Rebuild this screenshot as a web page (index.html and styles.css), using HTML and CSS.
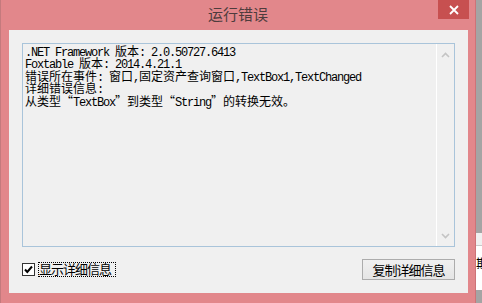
FILE: index.html
```html
<!DOCTYPE html>
<html lang="zh-CN">
<head>
<meta charset="utf-8">
<title>运行错误</title>
<link rel="stylesheet" href="styles.css">
</head>
<body>
<div class="screen">
  <div class="window">
    <div class="titlebar">
      <span class="title">运行错误</span>
      <div class="close">
        <svg width="10" height="10" viewBox="0 0 10 10"><path d="M1 1L9 9M9 1L1 9" stroke="#fff" stroke-width="1.8" fill="none"/></svg>
      </div>
    </div>
    <div class="client">
      <div class="textbox">
        <div class="text">
          <div class="ln">.NET Framework <span class="cj">版本</span>: 2.0.50727.6413</div>
          <div class="ln">Foxtable <span class="cj">版本</span>: 2014.4.21.1</div>
          <div class="ln"><span class="cj">错误所在事件</span>: <span class="cj">窗口</span>,<span class="cj">固定资产查询窗口</span>,TextBox1,TextChanged</div>
          <div class="ln"><span class="cj">详细错误信息</span>:</div>
          <div class="ln"><span class="cj">从类型“</span>TextBox<span class="cj">”到类型“</span>String<span class="cj">”的转换无效。</span></div>
        </div>
        <div class="scroll">
          <svg class="arrow" width="9" height="6" viewBox="0 0 9 6"><path d="M1 5L4.5 1.5L8 5" stroke="#c4c4c4" stroke-width="1.6" fill="none"/></svg>
          <svg class="arrow" width="9" height="6" viewBox="0 0 9 6"><path d="M1 1L4.5 4.5L8 1" stroke="#c4c4c4" stroke-width="1.6" fill="none"/></svg>
        </div>
      </div>
      <div class="footer">
        <label class="check">
          <span class="box"><svg width="11" height="11" viewBox="0 0 11 11"><path d="M2 5.5L4.3 8L9 2.5" stroke="#000" stroke-width="2" fill="none"/></svg></span>
          <span class="lbl">显示详细信息</span>
        </label>
        <button class="btn">复制详细信息</button>
      </div>
    </div>
  </div>
  <div class="behind">
    <div class="panel">
      <div class="panel-top"></div>
      <div class="panel-body">期</div>
    </div>
  </div>
</div>
</body>
</html>
```

FILE: styles.css
```css
html, body {
  margin: 0;
  padding: 0;
}
body {
  background: #a4a4a4;
  font-family: "Noto Sans CJK SC", sans-serif;
  overflow: hidden;
}
.screen {
  display: flex;
  width: 482px;
  height: 303px;
}
.window {
  width: 476px;
  height: 303px;
  box-sizing: border-box;
  flex: none;
  background: #e2878b;
  border-left: 1px solid #c47a7d;
  border-right: 1px solid #cd7378;
  display: flex;
  flex-direction: column;
}
.titlebar {
  position: relative;
  height: 30px;
  flex: none;
  text-align: center;
}
.title {
  display: block;
  font-size: 15px;
  line-height: 28px;
  color: #4e3c3d;
}
.close {
  position: absolute;
  top: 0;
  right: 6px;
  width: 31px;
  height: 19px;
  background: #c75050;
  display: flex;
  align-items: center;
  justify-content: center;
}
.client {
  margin: 0 7px 0 8px;
  width: 459px;
  height: 263px;
  box-sizing: border-box;
  padding: 13px;
  background: #f0f0f0;
  display: flex;
  flex-direction: column;
  gap: 12px;
}
.textbox {
  height: 205px;
  box-sizing: border-box;
  border: 1px solid #a9c4da;
  background: #f0f0f0;
  display: flex;
}
.text {
  flex: 1;
  padding: 1px 2px;
  font-family: "Liberation Mono", monospace;
  font-size: 12px;
  line-height: 12.4px;
  letter-spacing: -1.2px;
  color: #000;
}
.ln {
  white-space: nowrap;
  height: 12.4px;
}
.cj {
  font-family: "Noto Sans CJK SC", sans-serif;
  letter-spacing: 0;
}
.scroll {
  width: 17px;
  flex: none;
  border-left: 1px solid #ffffff;
  display: flex;
  flex-direction: column;
  align-items: center;
  justify-content: space-between;
  padding: 8px 0 7px;
}
.arrow {
  display: block;
}
.footer {
  height: 21px;
  display: flex;
  align-items: center;
  justify-content: space-between;
}
.check {
  display: flex;
  align-items: center;
  gap: 3px;
}
.box {
  width: 13px;
  height: 13px;
  box-sizing: border-box;
  border: 1px solid #333333;
  background: #ffffff;
  display: flex;
  align-items: center;
  justify-content: center;
}
.box svg {
  display: block;
}
.lbl {
  font-size: 13px;
  letter-spacing: -1px;
  line-height: 13px;
  height: 15px;
  box-sizing: border-box;
  padding: 0 5px 0 1px;
  outline: 1px dotted #000;
  outline-offset: -1px;
  color: #000;
}
.btn {
  width: 93px;
  height: 21px;
  box-sizing: border-box;
  margin: 0;
  padding: 0;
  border: 1px solid #acacac;
  background: linear-gradient(#f0f0f0, #e5e5e5);
  font-family: "Noto Sans CJK SC", sans-serif;
  font-size: 13px;
  letter-spacing: -1px;
  line-height: 17px;
  color: #000;
}
.behind {
  flex: 1;
  padding-top: 233px;
}
.panel {
  height: 57px;
  background: #ffffff;
}
.panel-top {
  height: 12px;
  background: #f0f0f0;
  border-bottom: 1px solid #c9c9c9;
}
.panel-body {
  font-size: 13px;
  line-height: 13px;
  padding-top: 10px;
  color: #000;
  white-space: nowrap;
  overflow: hidden;
}
```
